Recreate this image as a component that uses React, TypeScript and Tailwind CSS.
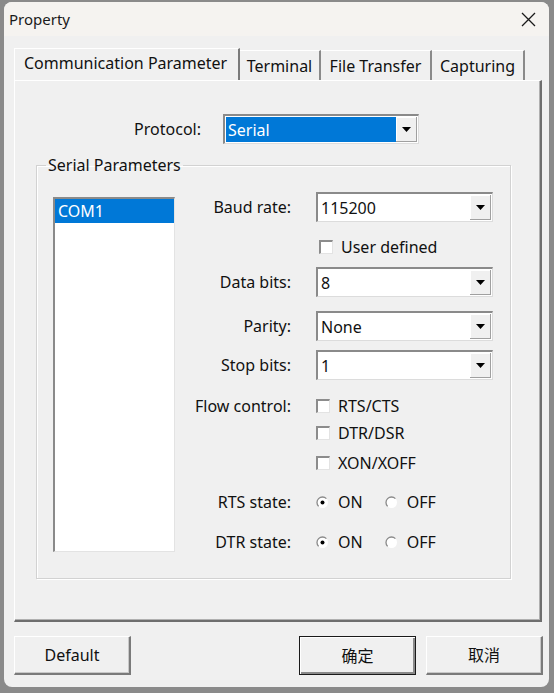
import React from 'react';

const font = { fontFamily: '"Noto Sans", "Noto Sans CJK SC", sans-serif' };

function ComboArrow() {
  return (
    <div className="w-[21px] h-full flex items-center justify-center bg-[#f0f0f0] border-r border-b border-[#a0a0a0] shadow-[inset_1px_1px_0_#ffffff]">
      <svg width="9" height="5" viewBox="0 0 9 5">
        <path d="M0 0 H9 L4.5 5 Z" fill="#000" />
      </svg>
    </div>
  );
}

function Combo({ value, selected, width }: { value: string; selected?: boolean; width: string }) {
  return (
    <div
      className={`${width} h-[30px] flex bg-white border-t-2 border-l-2 border-[#8a8a8a] border-r border-b border-r-[#dcdcdc] border-b-[#dcdcdc] p-[1px]`}
    >
      <div className="flex-1 flex items-center">
        <div
          className={`h-full w-full flex items-center pl-[2px] text-[16px] ${
            selected ? 'bg-[#0078d7] text-white' : 'text-[#111]'
          }`}
        >
          {value}
        </div>
      </div>
      <ComboArrow />
    </div>
  );
}

function CheckBox({ label }: { label: string }) {
  return (
    <div className="flex items-center gap-[8px]">
      <div className="w-[14px] h-[14px] bg-white border-t-2 border-l-2 border-[#8c8c8c] border-r border-b border-r-[#e3e3e3] border-b-[#e3e3e3]" />
      <span className="text-[16px] text-[#111]">{label}</span>
    </div>
  );
}

function Radio({ label, checked }: { label: string; checked?: boolean }) {
  return (
    <div className="flex items-center gap-[9px]">
      <svg width="13" height="13" viewBox="0 0 13 13">
        <circle cx="6.5" cy="6.5" r="5.5" fill="#fff" />
        <path d="M2.6 10.4 A5.5 5.5 0 0 1 10.4 2.6" stroke="#8a8a8a" strokeWidth="1.3" fill="none" />
        {checked && <circle cx="6.5" cy="6.5" r="2" fill="#000" />}
      </svg>
      <span className="text-[16px] text-[#111]">{label}</span>
    </div>
  );
}

function Row({ label, children, className }: { label: string; children: React.ReactNode; className: string }) {
  return (
    <div className={`flex items-center ${className}`}>
      <div className="w-[116px] text-right text-[16px] text-[#111]">{label}</div>
      <div className="ml-[25px] flex items-center">{children}</div>
    </div>
  );
}

function Button({ label, isDefault }: { label: string; isDefault?: boolean }) {
  return (
    <div
      className={`w-[117px] h-[39px] flex items-center justify-center text-[16px] text-[#111] bg-[#f0f0f0] ${
        isDefault
          ? 'border border-[#1a1a1a] shadow-[inset_1px_1px_0_#ffffff,inset_-2px_-2px_0_#8a8a8a]'
          : 'border-t border-l border-white border-r-2 border-b-2 border-r-[#7a7a7a] border-b-[#7a7a7a] shadow-[inset_-1px_-1px_0_#c8c8c8]'
      }`}
    >
      {label}
    </div>
  );
}

export default function App() {
  return (
    <div className="w-[554px] h-[693px] bg-[#8a8a8a] pt-[2px] pl-[4px] pr-[5px] pb-[6px]" style={font}>
      <div className="w-full h-full rounded-[8px] overflow-hidden bg-[#f0f0f0] flex flex-col">
        {/* title bar */}
        <div className="h-[34px] bg-[#f5f3f0] flex items-center justify-between pl-[5px] pr-[13px]">
          <span className="text-[15px] text-[#1a1a1a]">Property</span>
          <svg width="15" height="15" viewBox="0 0 15 15">
            <path d="M1 1 L14 14 M14 1 L1 14" stroke="#1a1a1a" strokeWidth="1.3" />
          </svg>
        </div>

        {/* tabs */}
        <div className="ml-[10px] mr-[7px] mt-[12px] flex items-end h-[32px]">
          <div className="w-[226px] h-[32px] bg-[#f0f0f0] border-t border-l border-white border-r-2 border-r-[#7a7a7a] flex items-start pt-[2px] pl-[9px] text-[16px] text-[#111] relative z-10">
            Communication Parameter
          </div>
          <div className="w-[81px] h-[30px] border-t border-white border-r-2 border-r-[#8a8a8a] flex items-center justify-center text-[16px] text-[#111]">
            Terminal
          </div>
          <div className="w-[111px] h-[30px] border-t border-white border-r-2 border-r-[#8a8a8a] flex items-center justify-center text-[16px] text-[#111]">
            File Transfer
          </div>
          <div className="w-[93px] h-[30px] border-t border-white border-r-2 border-r-[#8a8a8a] flex items-center justify-center text-[16px] text-[#111]">
            Capturing
          </div>
        </div>

        {/* tab page */}
        <div className="ml-[10px] mr-[7px] h-[542px] border-t border-l border-white border-r-2 border-b-2 border-r-[#6e6e6e] border-b-[#6e6e6e] shadow-[inset_-1px_-1px_0_#b0b0b0]">
          <div className="mt-[33px] flex items-center">
            <div className="w-[186px] text-right text-[16px] text-[#111]">Protocol:</div>
            <div className="ml-[22px]">
              <Combo value="Serial" selected width="w-[196px]" />
            </div>
          </div>

          <fieldset className="mt-[10px] ml-[21px] mr-[29px] border border-[#d2d2d2] shadow-[inset_1px_1px_0_#ffffff,1px_1px_0_#ffffff] pb-[24px]">
            <legend className="ml-[9px] px-[2px] text-[16px] leading-[22px] text-[#111]">Serial Parameters</legend>
            <div className="flex pl-[16px]">
              <div className="mt-[21px] w-[122px] h-[355px] bg-white border-t-2 border-l-2 border-[#8a8a8a] border-r border-b border-r-[#e3e3e3] border-b-[#e3e3e3]">
                <div className="h-[24px] bg-[#0078d7] text-white text-[16px] flex items-center pl-[3px]">COM1</div>
              </div>

              <div className="mt-[16px] flex flex-col">
                <Row label="Baud rate:" className="h-[30px]">
                  <Combo value="115200" width="w-[177px]" />
                </Row>
                <div className="mt-[10px] h-[30px] flex items-center pl-[144px]">
                  <CheckBox label="User defined" />
                </div>
                <Row label="Data bits:" className="mt-[5px] h-[30px]">
                  <Combo value="8" width="w-[177px]" />
                </Row>
                <Row label="Parity:" className="mt-[14px] h-[30px]">
                  <Combo value="None" width="w-[177px]" />
                </Row>
                <Row label="Stop bits:" className="mt-[9px] h-[30px]">
                  <Combo value="1" width="w-[177px]" />
                </Row>
                <Row label="Flow control:" className="mt-[14px] h-[24px]">
                  <CheckBox label="RTS/CTS" />
                </Row>
                <div className="mt-[3px] h-[24px] flex items-center pl-[141px]">
                  <CheckBox label="DTR/DSR" />
                </div>
                <div className="mt-[6px] h-[24px] flex items-center pl-[141px]">
                  <CheckBox label="XON/XOFF" />
                </div>
                <Row label="RTS state:" className="mt-[15px] h-[24px]">
                  <div className="flex items-center gap-[22px]">
                    <Radio label="ON" checked />
                    <Radio label="OFF" />
                  </div>
                </Row>
                <Row label="DTR state:" className="mt-[16px] h-[24px]">
                  <div className="flex items-center gap-[22px]">
                    <Radio label="ON" checked />
                    <Radio label="OFF" />
                  </div>
                </Row>
              </div>
            </div>
          </fieldset>
        </div>

        {/* buttons */}
        <div className="mt-[14px] ml-[10px] mr-[6px] flex items-center">
          <Button label="Default" />
          <div className="flex-1" />
          <Button label="确定" isDefault />
          <div className="w-[10px]" />
          <Button label="取消" />
        </div>
      </div>
    </div>
  );
}
